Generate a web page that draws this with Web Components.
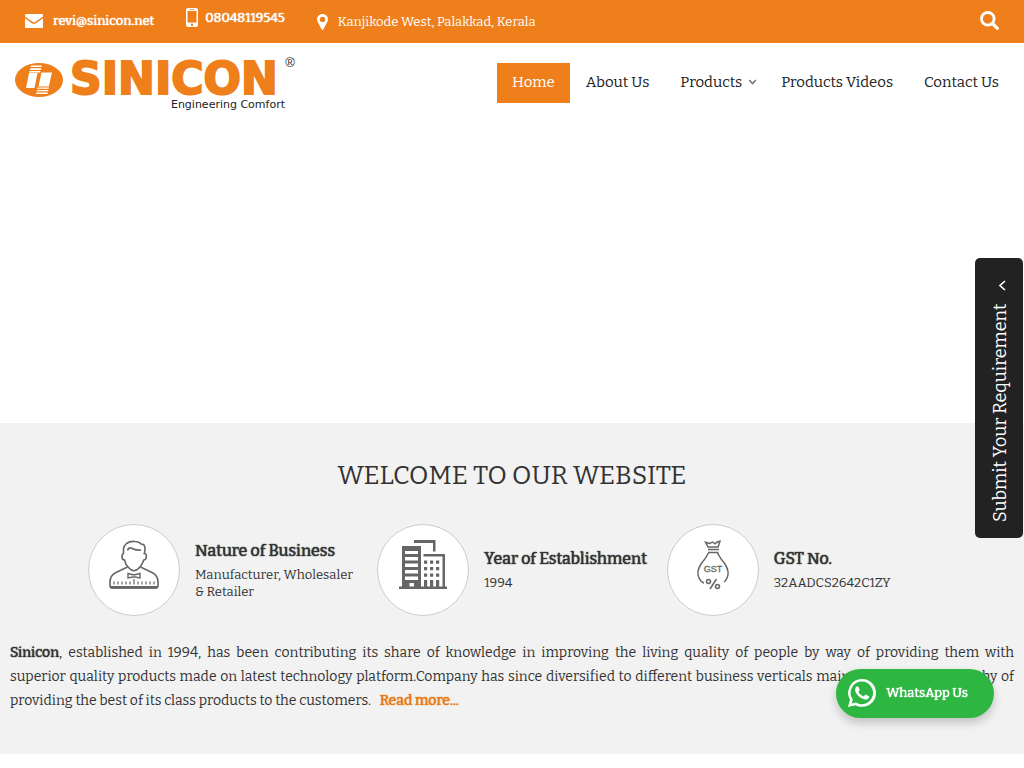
<!DOCTYPE html>
<html lang="en">
<head>
<meta charset="utf-8">
<meta name="viewport" content="width=device-width, initial-scale=1">
<title>Sinicon</title>
<style>
  :root {
    --brand: #ef7f1a;
    --ink: #333;
    --panel: #f2f2f2;
    /* thickens the regular weight without widening it */
    --heavy: 0 0 1px currentColor, 0 0 1px currentColor;
  }
  body {
    margin: 0;
    background: #fff;
    color: var(--ink);
    font: 14px/24px Bitter, "DejaVu Serif Condensed", "DejaVu Serif", serif;
  }
</style>
</head>
<body>
<sinicon-page></sinicon-page>

<script>
const define = (tag, html) => {
  const template = document.createElement("template");
  template.innerHTML = html;
  customElements.define(tag, class extends HTMLElement {
    constructor() {
      super();
      this.attachShadow({ mode: "open" }).append(template.content.cloneNode(true));
    }
  });
};

define("top-bar", `
<style>
  :host { display: flex; align-items: center; height: 43px; padding: 0 25px; background: var(--brand); color: #fff; font-size: 13px; line-height: 20px; }
  .item { display: flex; align-items: center; }
  .mail { gap: 10px; margin-right: 32px; padding-bottom: 2px; }
  .phone { gap: 7px; margin-right: 32px; padding-bottom: 8px; }
  .place { gap: 10px; }
  a { color: inherit; text-shadow: var(--heavy); text-decoration: none; }
  svg { display: block; fill: #fff; }
  button { margin-left: auto; padding: 0 0 2px; border: 0; background: none; cursor: pointer; }
</style>
<div class="item mail">
  <svg width="18" height="14" viewBox="0 0 18 14"><path d="M1 0h16q1 0 1 1v1.400L10.500 7.800Q9 8.900 7.500 7.800L0 2.400V1q0-1 1-1zM0 4.300l6.600 4.700q2.400 1.700 4.800 0L18 4.300V13q0 1-1 1H1q-1 0-1-1z"/></svg>
  <a href="mailto:revi@sinicon.net">revi@sinicon.net</a>
</div>
<div class="item phone">
  <svg width="12" height="19" viewBox="0 0 12 19"><path fill-rule="evenodd" d="M2 0h8q2 0 2 2v15q0 2-2 2H2q-2 0-2-2V2q0-2 2-2zM1.500 3v11.500h9V3zM4 1.200v.8h4v-.8zM6 15.500a1.200 1.200 0 1 0 .01 0z"/></svg>
  <a href="tel:08048119545">08048119545</a>
</div>
<div class="item place">
  <svg width="11" height="16" viewBox="0 0 11 16"><path fill-rule="evenodd" d="M5.500 0C2.400 0 0 2.300 0 5.300c0 1.100.3 1.900.8 2.800l3.700 7.200q1 1.300 2 0l3.700-7.200c.5-.9.8-1.700.8-2.800C11 2.300 8.600 0 5.500 0zm0 2.700a2.700 2.700 0 1 1 0 5.400 2.700 2.700 0 0 1 0-5.400z"/></svg>
  <span>Kanjikode West, Palakkad, Kerala</span>
</div>
<button type="button" aria-label="Search">
  <svg width="19" height="19" viewBox="0 0 19 19" style="fill:none;stroke:#fff"><circle cx="7.800" cy="7.800" r="6.300" stroke-width="2.800"/><path d="M12.500 12.500l4.800 4.800" stroke-width="3.200" stroke-linecap="round"/></svg>
</button>
`);

define("brand-logo", `
<style>
  :host { display: block; }
  a, svg { display: block; }
</style>
<a href="#" aria-label="Sinicon">
  <svg width="281" height="64" viewBox="0 -6 281 64">
    <ellipse cx="24" cy="23" rx="24" ry="17" fill="#ef7f1a"/>
    <g fill="#fff">
      <path d="M16 8.500h11l-.4 1.600H15.600zM15.200 11.200h11l-.4 1.700H14.800zM14.500 14h11l-.4 1.500H14.100zM14 16h8.500L19.500 31H11z"/>
      <path d="M26.500 15.500h10.500l-3.200 14H23.500zM22.500 30.500H34l-.3 1.300H22.200zM22 33h11.400l-.4 1.300H21.600zM21.400 35.500h11.400l-.4 1.500H21z"/>
    </g>
    <text x="55" y="37" font-family="DejaVu Sans, sans-serif" font-weight="700" font-size="44" fill="#ef7f1a" stroke="#ef7f1a" stroke-width="2">SINICON</text>
    <text x="275" y="10" text-anchor="middle" font-family="Liberation Sans, sans-serif" font-size="13" fill="#222">®</text>
    <text x="270" y="51" text-anchor="end" font-family="DejaVu Sans, sans-serif" font-size="11" fill="#222">Engineering Comfort</text>
  </svg>
</a>
`);

define("nav-item", `
<style>
  :host { display: block; }
  a { display: flex; align-items: center; gap: 6px; height: 40px; padding: 0 15px 2px; box-sizing: border-box; color: #222; font-size: 15px; text-decoration: none; white-space: nowrap; }
  :host([active]) a { background: var(--brand); color: #fff; }
  svg { display: none; margin-right: -7px; fill: none; stroke: #777; stroke-width: 1.600; }
  :host([menu]) svg { display: block; }
</style>
<a href="#"><slot></slot><svg width="9" height="6" viewBox="0 0 9 6"><path d="M1.200 1l3.300 3.500L7.800 1"/></svg></a>
`);

define("site-header", `
<style>
  :host { display: flex; justify-content: space-between; align-items: center; height: 80px; padding: 0 10px 0 15px; }
  nav { display: flex; gap: 1px; }
</style>
<brand-logo></brand-logo>
<nav>
  <nav-item active>Home</nav-item>
  <nav-item>About Us</nav-item>
  <nav-item menu>Products</nav-item>
  <nav-item>Products Videos</nav-item>
  <nav-item>Contact Us</nav-item>
</nav>
`);

define("fact-card", `
<style>
  :host { display: flex; align-items: center; gap: 15px; padding: 0 10px; font-size: 13px; line-height: 17px; }
  .disc { flex: none; box-sizing: border-box; width: 92px; height: 92px; display: flex; justify-content: center; padding-top: 15px; border: 1px solid #ccc; border-radius: 50%; background: #fff; }
  .text { padding-bottom: 1px; }
  h3 { margin: 0 0 4px; font-size: 16px; line-height: 22px; font-weight: 400; white-space: nowrap; text-shadow: var(--heavy); }
  p { margin: 0; }
</style>
<div class="disc"><slot name="icon"></slot></div>
<div class="text"><h3><slot name="title"></slot></h3><p><slot></slot></p></div>
`);

define("welcome-section", `
<style>
  :host { display: block; padding: 33px 10px 41px; background: var(--panel); }
  h2 { margin: 0 0 28px; font-size: 26px; line-height: 40px; font-weight: 400; text-align: center; text-transform: uppercase; }
  .facts { display: grid; grid-template-columns: repeat(3, minmax(0, 1fr)); max-width: 868px; margin: 0 auto 25px; }
  .about { margin: 0; font-size: 14px; line-height: 24px; text-align: justify; }
  .full { display: block; text-align-last: justify; }
  b { font-weight: 400; text-shadow: var(--heavy); }
  a { margin-left: 6px; color: #e87817; text-decoration: none; text-shadow: var(--heavy); }
</style>
<h2>Welcome To Our Website</h2>
<div class="facts">
  <fact-card>
    <svg slot="icon" width="50" height="50" viewBox="0 0 50 50" fill="none" stroke="#666" stroke-width="1.600">
      <path d="M18.500 27L7 32.500Q1 35.500 1 42v3.500Q1 48 3.500 48h43q2.500 0 2.500-2.500V42q0-6.500-6-9.500L31.500 27"/>
      <path d="M1.500 47.200h47" stroke-width="2.600"/>
      <path d="M14.500 13.500V9q0-3 3-5.500Q21 1 26 1.500q4 0 6 2.500 4 0 4 4.500 0 2-.7 5 2.400 0 2 3.500-.3 2.800-2.500 3Q33 25 30.500 27.500 25 34 19.500 27.500 16.500 25 15.500 20q-2.500-.2-2.500-3 0-3.500 2-3.500z"/>
      <path d="M18.500 10.500q1-3 3.500-2.500 5 2.500 10 2"/>
      <path d="M19 33.500l5 1.200h2l5-1.200v4.500l-5-1h-2l-5 1z" stroke-width="1.400"/>
      <path d="M5 41.500v3M9 41.500v3M13 41.500v3M17 41.500v3M21 41.500v3M25 39v5.500M29 41.500v3M33 41.500v3M37 41.500v3M41 41.500v3M45 41.500v3" stroke-width="1.200"/>
    </svg>
    <span slot="title">Nature of Business</span>
    Manufacturer, Wholesaler &amp; Retailer
  </fact-card>
  <fact-card>
    <svg slot="icon" width="50" height="50" viewBox="0 0 50 50">
      <g fill="#666">
        <path fill-rule="evenodd" d="M4 6h19v41H4zM7 11v3h13v-3zM7 17v3.500h13V17zM7 23.500V27h13v-3.500zM7 30v3.500h13V30zM7 36.500V40h13v-3.500zM11.500 43v4h4.500v-4z"/>
        <path d="M1 46.500h48v2.500H1zM16 0h21.500v11.500h-2.500V3H16zM25.500 14H47v33h-2.500V16.500H25.500z"/>
        <path d="M26 20.500h3.200v3.200H26zM32 20.500h3.200v3.200H32zM38 20.500h3.200v3.200H38zM26 27h3.200v3.200H26zM32 27h3.200v3.200H32zM38 27h3.200v3.200H38zM26 33.500h3.200v3.200H26zM32 33.500h3.200v3.200H32zM38 33.500h3.200v3.200H38zM26 40h3.200v7H26zM32 40h3.200v7H32zM38 40h3.200v7H38z"/>
      </g>
    </svg>
    <span slot="title">Year of Establishment</span>
    1994
  </fact-card>
  <fact-card>
    <svg slot="icon" width="50" height="50" viewBox="0 0 50 50" fill="none" stroke="#666" stroke-width="1.500">
      <path d="M20 7L17.500 2.200l4 1.300 3-1.500 2.500 1.800 2.500-2L32 1.200 30 7zM20 9.500h11M20 12.500h10.500"/>
      <path d="M20.500 13Q18 18 13 24q-5 8-2 14 2 4 5 5M29.500 13Q32 18 37 24q5 8 2 14-1 2.500-3 4"/>
      <circle cx="20.500" cy="41.500" r="2"/>
      <circle cx="29.500" cy="46.500" r="2"/>
      <path d="M28.500 39L22 49"/>
      <text x="25" y="32" text-anchor="middle" font-family="Liberation Sans, sans-serif" font-size="9" fill="#666" stroke="#666" stroke-width=".3">GST</text>
    </svg>
    <span slot="title">GST No.</span>
    32AADCS2642C1ZY
  </fact-card>
</div>
<p class="about"><span class="full"><b>Sinicon</b>, established in 1994, has been contributing its share of knowledge in improving the living quality of people by way of providing them with</span> <span class="full">superior quality products made on latest technology platform.Company has since diversified to different business verticals maintaining the philosophy of</span> providing the best of its class products to the customers. <a href="#">Read more...</a></p>
`);

define("enquiry-tab", `
<style>
  :host { position: fixed; top: 258px; right: 1px; }
  button { display: flex; align-items: center; gap: 12px; box-sizing: border-box; width: 48px; height: 280px; padding: 16px 2px 16px 0; border: 0; border-radius: 5px; background: #222; color: #fff; font: inherit; font-size: 18px; line-height: 24px; writing-mode: vertical-rl; transform: rotate(180deg); white-space: nowrap; cursor: pointer; }
  svg { margin-right: 6px; fill: none; stroke: #fff; stroke-width: 1.600; }
</style>
<button type="button"><span>Submit Your Requirement</span><svg width="7" height="11" viewBox="0 0 7 11"><path d="M1 1l5 4.500L1 10"/></svg></button>
`);

define("whatsapp-button", `
<style>
  :host { position: fixed; right: 30px; bottom: 50px; }
  a { display: flex; align-items: center; gap: 10px; box-sizing: border-box; height: 49px; padding: 0 26px 1px 12px; border-radius: 25px; background: #2db742; box-shadow: 0 5px 10px rgba(0, 0, 0, .2); color: #fff; font-size: 13px; text-decoration: none; text-shadow: var(--heavy); white-space: nowrap; }
</style>
<a href="#">
  <svg width="28" height="28" viewBox="0 0 24 24" fill="#fff"><path d="M17.472 14.382c-.297-.149-1.758-.867-2.030-.967-.273-.099-.471-.148-.670.150-.197.297-.767.966-.940 1.164-.173.199-.347.223-.644.075-.297-.150-1.255-.463-2.390-1.475-.883-.788-1.480-1.761-1.653-2.059-.173-.297-.018-.458.130-.606.134-.133.298-.347.446-.520.149-.174.198-.298.298-.497.099-.198.050-.371-.025-.520-.075-.149-.669-1.612-.916-2.207-.242-.579-.487-.500-.669-.510-.173-.008-.371-.010-.570-.010-.198 0-.520.074-.792.372-.272.297-1.040 1.016-1.040 2.479 0 1.462 1.065 2.875 1.213 3.074.149.198 2.096 3.200 5.077 4.487.709.306 1.262.489 1.694.625.712.227 1.360.195 1.871.118.571-.085 1.758-.719 2.006-1.413.248-.694.248-1.289.173-1.413-.074-.124-.272-.198-.570-.347"/><path fill-rule="evenodd" d="M12.100 0a11.900 11.900 0 0 1 0 23.800c-2 0-3.900-.5-5.700-1.400L0 24l1.700-6.200A11.900 11.900 0 0 1 12.100 0zm0 2.200a9.700 9.700 0 0 0-8.300 15l.3.400-1 3.500 3.600-.9.400.2a9.700 9.700 0 1 0 5-18.200z"/></svg>
  <span>WhatsApp Us</span>
</a>
`);

define("sinicon-page", `
<style>
  :host { display: block; }
  .banner { height: 300px; }
</style>
<header><top-bar></top-bar><site-header></site-header></header>
<main>
  <div class="banner"></div>
  <welcome-section></welcome-section>
</main>
<enquiry-tab></enquiry-tab>
<whatsapp-button></whatsapp-button>
`);
</script>
</body>
</html>
